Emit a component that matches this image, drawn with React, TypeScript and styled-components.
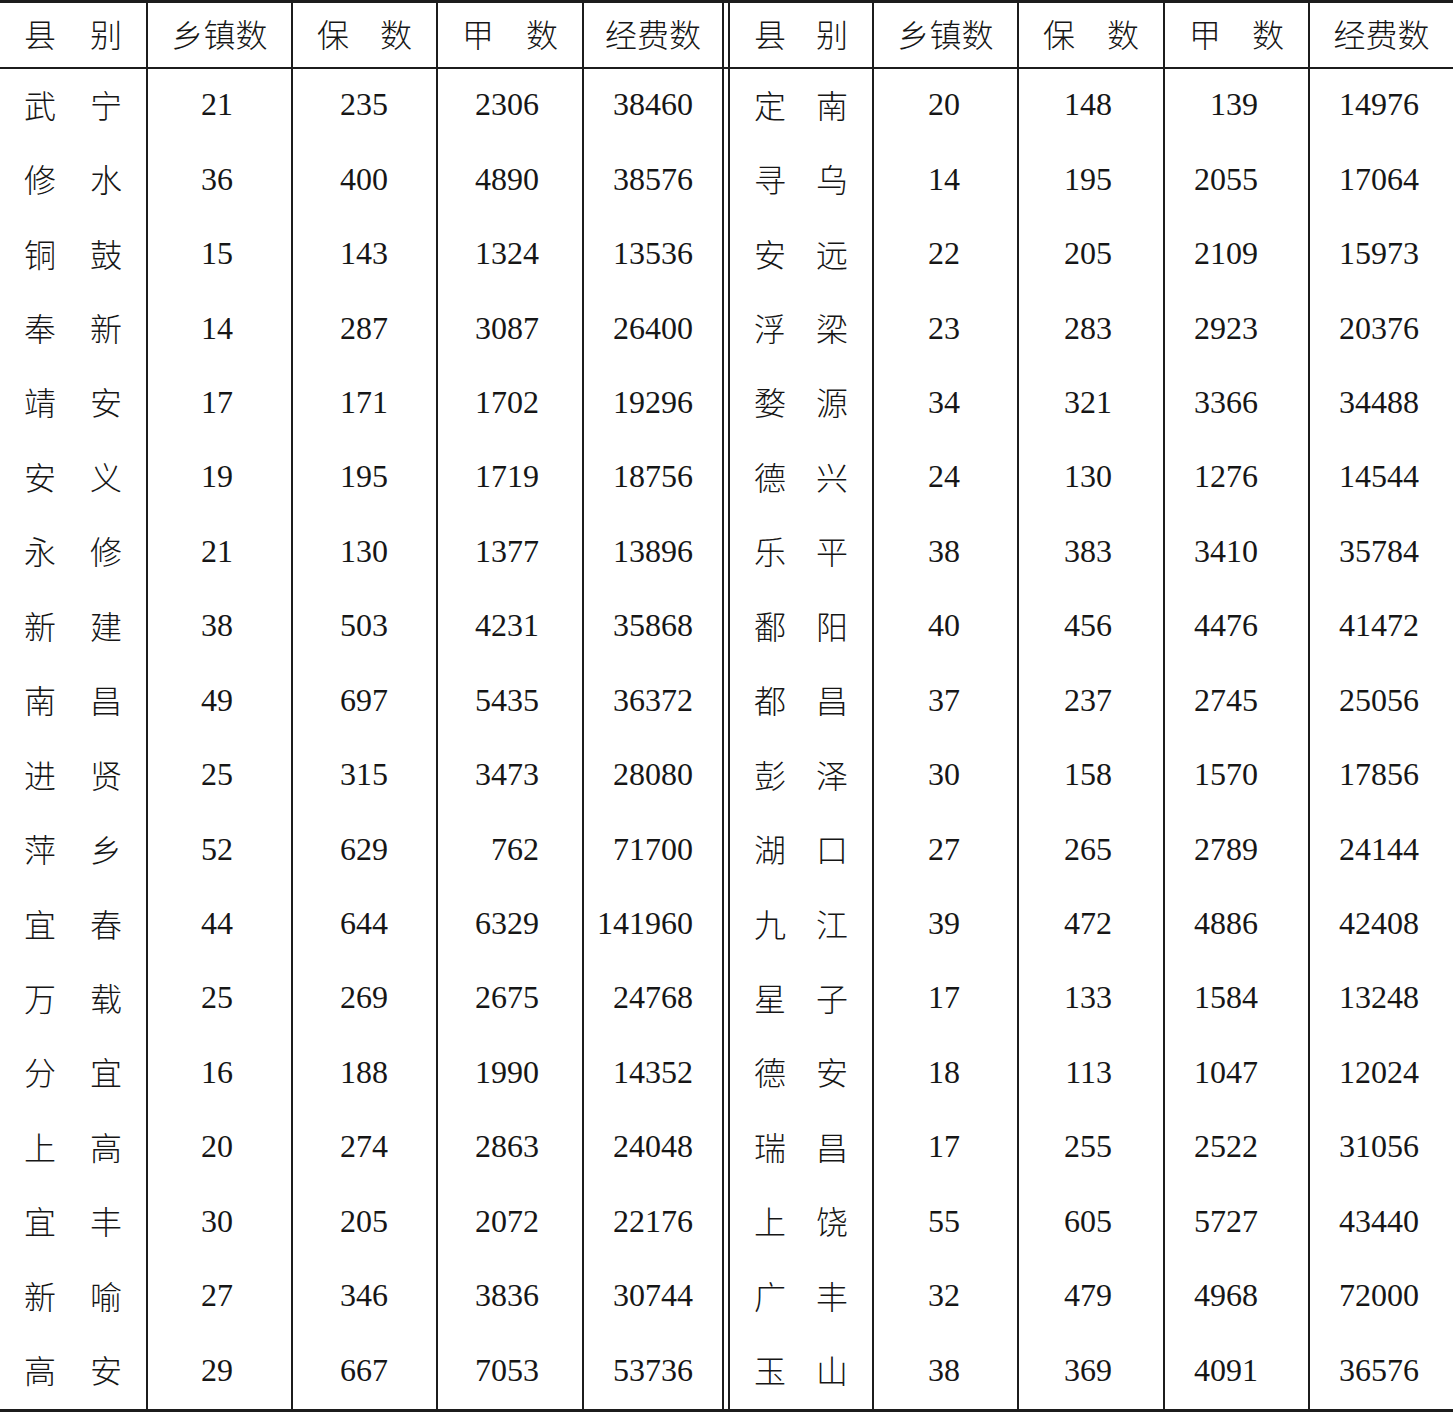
import * as React from "react";
import styled, { createGlobalStyle } from "styled-components";

const GlobalStyle = createGlobalStyle`
  html, body {
    margin: 0;
    padding: 0;
    background: #ffffff;
  }
`;

// column widths: 5 columns, double rule, 5 columns
const COLUMNS = "146px 145px 145px 146px 140px 8px 142px 145px 146px 145px 145px";
const LINE = "#1c1c1c";

// right padding for the number columns, as they sit in the print
const LEFT_PADS = [58, 48, 43, 29];
const RIGHT_PADS = [57, 51, 50, 34];

const StyledSheet = styled.div`
  width: 1453px;
  border-top: 3px solid ${LINE};
  border-bottom: 3px solid ${LINE};
  font-family: "Liberation Serif", "Noto Sans CJK SC", serif;
  font-size: 32px;
  color: #161616;
`;

const StyledRow = styled.div<{ $head?: boolean }>`
  display: grid;
  grid-template-columns: ${COLUMNS};
  height: ${props => (props.$head ? "64px" : "74.45px")};
  border-bottom: ${props => (props.$head ? `2px solid ${LINE}` : "none")};
`;

const StyledCell = styled.div<{ $ruled?: boolean; $padRight?: number }>`
  display: flex;
  align-items: center;
  justify-content: flex-end;
  border-left: ${props => (props.$ruled ? `2px solid ${LINE}` : "none")};
  padding-right: ${props => props.$padRight || 0}px;
  padding-bottom: 3px;
  white-space: nowrap;
`;

const StyledNameCell = styled.div<{ $ruled?: boolean }>`
  display: flex;
  align-items: center;
  justify-content: space-between;
  padding: 0 24px 5px 24px;
  border-left: ${props => (props.$ruled ? `2px solid ${LINE}` : "none")};
  font-family: "Noto Sans CJK SC", serif;
  font-weight: 300;
`;

const StyledTitleCell = styled.div<{ $ruled?: boolean }>`
  display: flex;
  align-items: center;
  justify-content: center;
  padding-bottom: 5px;
  border-left: ${props => (props.$ruled ? `2px solid ${LINE}` : "none")};
  font-family: "Noto Sans CJK SC", serif;
  font-weight: 300;
`;

const StyledDoubleRule = styled.div`
  border-left: 2px solid ${LINE};
  border-right: 2px solid ${LINE};
`;

type Line = [string, number, number, number, number];

const leftRows: Line[] = [
  ["武宁", 21, 235, 2306, 38460],
  ["修水", 36, 400, 4890, 38576],
  ["铜鼓", 15, 143, 1324, 13536],
  ["奉新", 14, 287, 3087, 26400],
  ["靖安", 17, 171, 1702, 19296],
  ["安义", 19, 195, 1719, 18756],
  ["永修", 21, 130, 1377, 13896],
  ["新建", 38, 503, 4231, 35868],
  ["南昌", 49, 697, 5435, 36372],
  ["进贤", 25, 315, 3473, 28080],
  ["萍乡", 52, 629, 762, 71700],
  ["宜春", 44, 644, 6329, 141960],
  ["万载", 25, 269, 2675, 24768],
  ["分宜", 16, 188, 1990, 14352],
  ["上高", 20, 274, 2863, 24048],
  ["宜丰", 30, 205, 2072, 22176],
  ["新喻", 27, 346, 3836, 30744],
  ["高安", 29, 667, 7053, 53736]
];

const rightRows: Line[] = [
  ["定南", 20, 148, 139, 14976],
  ["寻乌", 14, 195, 2055, 17064],
  ["安远", 22, 205, 2109, 15973],
  ["浮梁", 23, 283, 2923, 20376],
  ["婺源", 34, 321, 3366, 34488],
  ["德兴", 24, 130, 1276, 14544],
  ["乐平", 38, 383, 3410, 35784],
  ["鄱阳", 40, 456, 4476, 41472],
  ["都昌", 37, 237, 2745, 25056],
  ["彭泽", 30, 158, 1570, 17856],
  ["湖口", 27, 265, 2789, 24144],
  ["九江", 39, 472, 4886, 42408],
  ["星子", 17, 133, 1584, 13248],
  ["德安", 18, 113, 1047, 12024],
  ["瑞昌", 17, 255, 2522, 31056],
  ["上饶", 55, 605, 5727, 43440],
  ["广丰", 32, 479, 4968, 72000],
  ["玉山", 38, 369, 4091, 36576]
];

const Spread = ({ text, ruled }: { text: string; ruled?: boolean }) => (
  <StyledNameCell $ruled={ruled}>
    <span>{text[0]}</span>
    <span>{text[1]}</span>
  </StyledNameCell>
);

const HalfHead = ({ ruled }: { ruled?: boolean }) => (
  <>
    <Spread text="县别" ruled={ruled} />
    <StyledTitleCell $ruled>乡镇数</StyledTitleCell>
    <Spread text="保数" ruled />
    <Spread text="甲数" ruled />
    <StyledTitleCell $ruled>经费数</StyledTitleCell>
  </>
);

const HalfRow = ({ line, pads }: { line: Line; pads: number[] }) => (
  <>
    <Spread text={line[0]} />
    {line.slice(1).map((value, i) => (
      <StyledCell key={i} $ruled $padRight={pads[i]}>
        {value}
      </StyledCell>
    ))}
  </>
);

export default function App() {
  return (
    <>
      <GlobalStyle />
      <StyledSheet>
        <StyledRow $head>
          <HalfHead />
          <StyledDoubleRule />
          <HalfHead />
        </StyledRow>
        {leftRows.map((line, i) => (
          <StyledRow key={line[0] + i}>
            <HalfRow line={line} pads={LEFT_PADS} />
            <StyledDoubleRule />
            <HalfRow line={rightRows[i]} pads={RIGHT_PADS} />
          </StyledRow>
        ))}
      </StyledSheet>
    </>
  );
}
